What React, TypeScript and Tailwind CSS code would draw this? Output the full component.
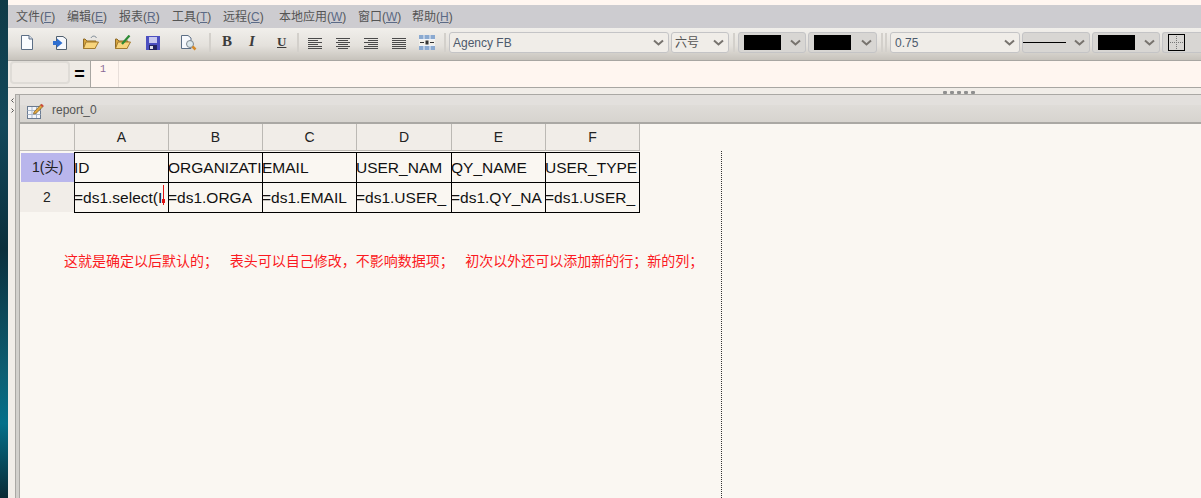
const cjk = "font-['Liberation_Sans','Noto_Sans_CJK_SC',sans-serif]"

const menus = [
  { label: '文件', key: 'F', w: 51 },
  { label: '编辑', key: 'E', w: 52 },
  { label: '报表', key: 'R', w: 53 },
  { label: '工具', key: 'T', w: 51 },
  { label: '远程', key: 'C', w: 56 },
  { label: '本地应用', key: 'W', w: 79 },
  { label: '窗口', key: 'W', w: 54 },
  { label: '帮助', key: 'H', w: 50 },
]

const headers = ['A', 'B', 'C', 'D', 'E', 'F']
const row1 = ['ID', 'ORGANIZATI', 'EMAIL', 'USER_NAM', 'QY_NAME', 'USER_TYPE']
const row2 = ['=ds1.select(I', '=ds1.ORGA', '=ds1.EMAIL', '=ds1.USER_', '=ds1.QY_NA', '=ds1.USER_']

function Chevron() {
  return (
    <svg width="11" height="7" viewBox="0 0 11 7" className="shrink-0">
      <path d="M1 1.5 L5.5 5.5 L10 1.5" fill="none" stroke="#77736e" strokeWidth="2" />
    </svg>
  )
}

function Select({ className, children }: { className: string; children: React.ReactNode }) {
  return (
    <div className={`flex h-[21px] shrink-0 items-center justify-between rounded-[3px] border border-[#c4c4c6] ${className}`}>
      {children}
    </div>
  )
}

function Separator({ className = '' }: { className?: string }) {
  return <div className={`h-[19px] w-[2px] shrink-0 bg-[#d3d0cb] ${className}`} />
}

function DocIcon() {
  return (
    <svg width="12" height="15" viewBox="0 0 12 15" className="ml-[13px] shrink-0">
      <path d="M.5.5H8L11.5 4V14.5H.5Z" fill="#fafcff" stroke="#5c6f86" />
      <path d="M8 .5V4H11.5" fill="#d5dde8" stroke="#5c6f86" />
    </svg>
  )
}

function ImportIcon() {
  return (
    <svg width="14" height="14" viewBox="0 0 14 14" className="ml-[20px] shrink-0">
      <path d="M3.5.5H10L13.5 3V13.5H3.5Z" fill="#f6f8fc" stroke="#51606f" />
      <path d="M0 5H4V2.5L9.5 7 4 11.5V9H0Z" fill="#2f6fd0" />
    </svg>
  )
}

function FolderIcon({ check, className }: { check?: boolean; className: string }) {
  return (
    <svg width="17" height="15" viewBox="0 0 17 15" className={`shrink-0 ${className}`}>
      <path d="M1.5 4V13.5H13L14 6H5L3 4Z" fill="#d7a53c" stroke="#8d6b2a" />
      <path d="M1.5 13.5L4 7H16.5L13 13.5Z" fill="#f8d57c" stroke="#a37b2e" />
      {check ? (
        <path d="M8 9L15.5 .5" fill="none" stroke="#2c8a34" strokeWidth="2.2" />
      ) : (
        <path d="M9 3C10 0.5 13.5 0.5 14.5 3" fill="none" stroke="#7b8894" />
      )}
    </svg>
  )
}

function SaveIcon() {
  return (
    <svg width="14" height="14" viewBox="0 0 14 14" className="ml-[15px] shrink-0">
      <rect width="14" height="14" fill="#4c4fc0" />
      <rect x="3" y="1" width="8" height="6" fill="#c9c9ee" />
      <rect x="3" y="9" width="8" height="5" fill="#23235e" />
      <rect x="4" y="10" width="3" height="3" fill="#e0e0e8" />
    </svg>
  )
}

function PreviewIcon() {
  return (
    <svg width="16" height="16" viewBox="0 0 16 16" className="ml-[21px] shrink-0">
      <path d="M.5.5H7L10 3V13.5H.5Z" fill="#f6f8fc" stroke="#5c6f86" />
      <circle cx="9" cy="9" r="3.5" fill="#dce8ec" stroke="#7d8790" />
      <path d="M11.5 11.5L14.5 14.5" stroke="#d68a28" strokeWidth="2.5" />
    </svg>
  )
}

function AlignIcon({ lines, className }: { lines: [number, number][]; className: string }) {
  return (
    <svg width="14" height="12" viewBox="0 0 14 12" className={`shrink-0 ${className}`}>
      {lines.map(([x1, x2], i) => (
        <path key={i} d={`M${x1} ${i * 2 + 1.5}H${x2}`} stroke="#4a4a4a" />
      ))}
    </svg>
  )
}

function MergeIcon() {
  return (
    <svg width="16" height="15" viewBox="0 0 16 15" className="ml-[13px] shrink-0">
      <rect width="16" height="15" fill="#8aa9d0" />
      <path d="M0 4.5H16M0 10.5H16M5 0V4M11 0V4M5 11V15M11 11V15" stroke="#eef2f8" />
      <rect x="0" y="5" width="16" height="5" fill="#f2f0ea" />
      <path d="M1 7.5H5M11 7.5H15" stroke="#333" />
      <rect x="6.5" y="5.5" width="3" height="4" fill="#333" />
    </svg>
  )
}

function ReportIcon() {
  return (
    <svg width="17" height="16" viewBox="0 0 17 16" className="mb-[6px] ml-[7px] shrink-0">
      <rect x=".5" y="3.5" width="13" height="12" fill="#f4f6fa" stroke="#6a7a90" />
      <path d="M.5 7.5H13.5M.5 11.5H13.5M5 4V15M9.5 4V15" stroke="#a9b8cc" />
      <path d="M7 9L14 1.5 16 3.5 9 10.5 6.5 11Z" fill="#e0a63c" stroke="#7a5c28" strokeWidth=".7" />
      <path d="M14 1.5L16 3.5" stroke="#cc4a3a" strokeWidth="2" />
    </svg>
  )
}

function Toolbar() {
  return (
    <div className="flex h-[33px] shrink-0 items-start border-b border-[#a8a6a2] bg-[linear-gradient(#f1efeb,#e4e1dc_55%,#c7c3bc)] pt-[4px]">
      <div className="flex h-[21px] items-center">
        <DocIcon />
        <ImportIcon />
        <FolderIcon className="ml-[15px]" />
        <FolderIcon check className="ml-[15px]" />
        <SaveIcon />
        <PreviewIcon />
        <Separator className="ml-[12px]" />
        <span className="mb-[2px] ml-[11px] w-[10px] font-['Liberation_Serif',serif] text-[15px] leading-none font-bold text-[#3c3c3c]">B</span>
        <span className="mb-[2px] ml-[17px] w-[10px] font-['Liberation_Serif',serif] text-[15px] leading-none font-bold text-[#3c3c3c] italic">I</span>
        <span className="mb-[2px] ml-[18px] w-[9px] font-['Liberation_Serif',serif] text-[13px] leading-none font-bold text-[#3c3c3c] underline">U</span>
        <Separator className="ml-[11px]" />
        <AlignIcon className="ml-[9px]" lines={[[0, 14], [0, 10], [0, 14], [0, 10], [0, 14], [0, 14]]} />
        <AlignIcon className="ml-[14px]" lines={[[0, 14], [2, 12], [0, 14], [2, 12], [0, 14], [2, 12]]} />
        <AlignIcon className="ml-[14px]" lines={[[0, 14], [4, 14], [0, 14], [4, 14], [0, 14], [0, 14]]} />
        <AlignIcon className="ml-[14px]" lines={[[0, 14], [0, 14], [0, 14], [0, 14], [0, 14], [0, 14]]} />
        <MergeIcon />
        <Separator className="ml-[9px]" />
      </div>
      <Select className="ml-[3px] w-[220px] bg-[#f0ede8] pr-[4px] pl-[3px]">
        <span className="text-[12px] text-[#4d5a6c]">Agency FB</span>
        <Chevron />
      </Select>
      <Select className="ml-[2px] w-[58px] bg-[#f0ede8] pr-[4px] pl-[3px]">
        <span className="text-[12px] text-[#555]">六号</span>
        <Chevron />
      </Select>
      <Separator className="mt-[1px] ml-[4px]" />
      <Select className="ml-[3px] w-[68px] bg-[#d8d6d3] pr-[4px] pl-[5px]">
        <div className="h-[15px] w-[37px] bg-black" />
        <Chevron />
      </Select>
      <Select className="ml-[2px] w-[69px] bg-[#d8d6d3] pr-[4px] pl-[5px]">
        <div className="h-[15px] w-[37px] bg-black" />
        <Chevron />
      </Select>
      <Separator className="mt-[1px] ml-[4px]" />
      <Separator className="mt-[1px] ml-[2px]" />
      <Select className="ml-[3px] w-[130px] bg-[#f0ede8] pr-[4px] pl-[4px]">
        <span className="text-[12px] text-[#4d5a6c]">0.75</span>
        <Chevron />
      </Select>
      <Select className="ml-[2px] w-[68px] bg-[#d8d6d3] pr-[4px]">
        <div className="h-px w-[43px] bg-black" />
        <Chevron />
      </Select>
      <Select className="ml-[2px] w-[68px] bg-[#d8d6d3] pr-[4px] pl-[5px]">
        <div className="h-[15px] w-[37px] bg-black" />
        <Chevron />
      </Select>
      <Select className="ml-[2px] min-w-0 flex-1 rounded-r-none border-r-0 bg-[#d8d6d3] pl-[5px]">
        <svg width="17" height="17" viewBox="0 0 17 17">
          <rect x=".5" y=".5" width="16" height="16" fill="none" stroke="#000" />
          <path d="M8.5 2V15M2 8.5H15" stroke="#777" strokeDasharray="1 1" />
        </svg>
      </Select>
    </div>
  )
}

function FormulaBar() {
  return (
    <div className="flex h-[27px] shrink-0 items-stretch border-b border-[#a8a6a2] bg-[#eeeae5]">
      <div className="mb-[3px] ml-[2px] w-[60px] rounded-[4px] border-2 border-[#dfdcd7]" />
      <div className="flex w-[20px] items-center justify-center pr-[1px] text-[18px] font-bold text-black">=</div>
      <div className="flex flex-1 border-l border-[#a8a6a2] bg-[#fff6f0]">
        <div className="w-[28px] border-r border-[#e8dfda] pt-[3px] pl-[9px] font-['Liberation_Mono',monospace] text-[10px] leading-[12px] text-[#8a6a96]">1</div>
      </div>
    </div>
  )
}

function Splitter() {
  return (
    <div className="flex h-[6px] shrink-0 items-end justify-center bg-[#f1ede8] pl-[709px]">
      <div className="flex gap-[3px]">
        {[0, 1, 2, 3, 4].map((i) => (
          <div key={i} className="h-[3px] w-[4px] rounded-[1px] bg-[#8f8f8f]" />
        ))}
      </div>
    </div>
  )
}

function Sheet() {
  const dataCell = 'relative h-full whitespace-nowrap border-t border-l border-black text-[15.5px] leading-[29px] text-[#111] indent-[-1px]'
  return (
    <div className="relative min-h-0 flex-1 bg-[#faf7f2]">
      <div className="grid w-[620px] grid-cols-[54px_94px_94px_94px_95px_94px_95px] grid-rows-[28px_30px_31px]">
        <div className="mb-px border-b border-[#c2bfba] bg-[#f2eee9]" />
        {headers.map((h, i) => (
          <div key={h} className={`mb-px flex items-center justify-center border-b border-l border-[#bcb9b4] bg-[#f1ede8] text-[14px] text-[#222] ${i === 5 ? 'border-r' : ''}`}>
            {h}
          </div>
        ))}

        <div className="mt-px ml-px flex items-center justify-center bg-[#b9b6ec] text-[14px] text-[#222]">1(头)</div>
        {row1.map((t, i) => (
          <div key={t} className={`${dataCell} ${i === 5 ? 'border-r' : ''}`}>{t}</div>
        ))}

        <div className="mb-px flex items-center justify-center bg-[#f1ede8] text-[14px] text-[#222]">2</div>
        {row2.map((t, i) => (
          <div key={t} className={`${dataCell} border-b ${i === 5 ? 'border-r' : ''}`}>
            {t}
            {i === 0 && (
              <svg width="3" height="20" viewBox="0 0 3 20" className="absolute top-[2px] left-[87px]">
                <path d="M1.5 0V20" stroke="#e01010" />
                <rect x="0" y="14" width="3" height="4" fill="#e01010" />
              </svg>
            )}
          </div>
        ))}
      </div>

      <p className="mt-[39px] ml-[44px] whitespace-pre text-[14px] leading-[18px] text-[#fb1a22]">
        这就是确定以后默认的；   表头可以自己修改，不影响数据项；   初次以外还可以添加新的行；新的列；
      </p>

      <div className="absolute top-[27px] bottom-0 left-[701px] border-l border-dotted border-[#333]" />
    </div>
  )
}

export default function App() {
  return (
    <div className={`flex h-[498px] w-[1201px] overflow-hidden bg-[#f1ede8] ${cjk}`}>
      <div className="w-[8px] shrink-0 bg-[linear-gradient(#0f3a47,#12485a_25%,#0b2f3c_50%,#0d5f73_75%,#03708a_85%,#0a2a34)]" />
      <div className="flex min-w-0 flex-1 flex-col">
        <div className="h-[5px] shrink-0 bg-[#fff6f0]" />
        <div className="flex h-[23px] shrink-0 items-center bg-[#cdccd0] pl-[8px] text-[12px] text-[#555]">
          {menus.map((m) => (
            <span key={m.label} className="shrink-0" style={{ width: m.w }}>
              {m.label}(<span className="text-[#5b6a86] underline">{m.key}</span>)
            </span>
          ))}
        </div>
        <Toolbar />
        <FormulaBar />
        <Splitter />
        <div className="flex min-h-0 flex-1">
          <div className="w-[7px] shrink-0 pt-[4px] pl-[3px]">
            <svg width="3" height="15" viewBox="0 0 3 15">
              <path d="M2.5 0.5L.5 2.5 2.5 4.5M.5 10.5L2.5 12.5 .5 14.5" fill="none" stroke="#555" />
            </svg>
          </div>
          <div className="flex min-w-0 flex-1 flex-col border-t border-l border-[#aaa8a4]">
            <div className="flex min-h-0 flex-1 flex-col border-l-[3px] border-[#d2d0cc]">
              <div className="flex h-[29px] shrink-0 flex-col border-l border-[#aaa8a4]">
                <div className="h-[10px] bg-[#e3e0dd]" />
                <div className="flex h-[19px] items-center border-b-2 border-[#aaa8a4] bg-[linear-gradient(#dfdcd8,#d7d4cf)]">
                  <ReportIcon />
                  <span className="mb-[7px] ml-[8px] text-[12px] leading-none text-[#555]">report_0</span>
                </div>
              </div>
              <div className="flex min-h-0 flex-1 flex-col border-l border-[#aaa8a4]">
                <Sheet />
              </div>
            </div>
          </div>
        </div>
      </div>
    </div>
  )
}
